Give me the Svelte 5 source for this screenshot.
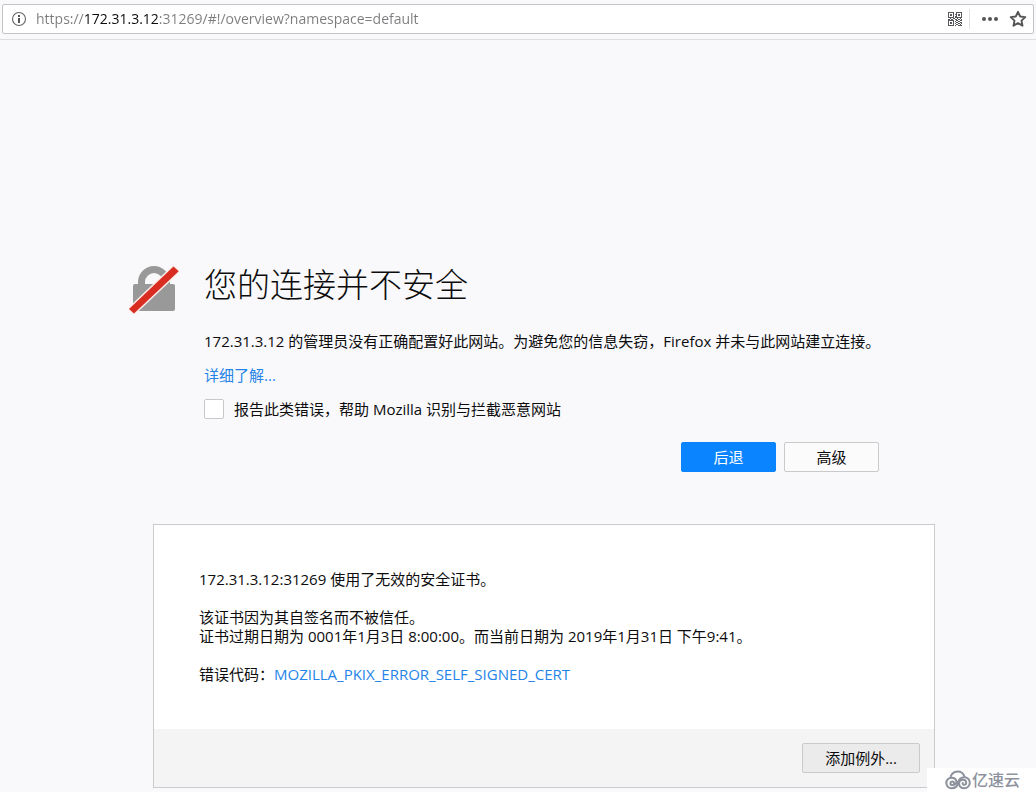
<script>
  let url = $state("https://172.31.3.12:31269/#!/overview?namespace=default");
  let report = $state(false);
  let starred = $state(false);
  let showDetails = $state(true);

  const host = "172.31.3.12";
  const errorCode = "MOZILLA_PKIX_ERROR_SELF_SIGNED_CERT";

  // QR glyph, one string per row
  const qr = [
    "11111100111111",
    "10000100100001",
    "10110101101101",
    "10110100101101",
    "10000101100001",
    "11111101111111",
    "00100110010010",
    "11011001101101",
    "11111100110011",
    "10000101001100",
    "10110100110011",
    "10110101001101",
    "10000100110010",
    "11111101001111",
  ];
</script>

<div class="page">
  <header class="toolbar">
    <div class="urlbar">
      <button class="icon-btn" aria-label="Site information">
        <svg width="16" height="16" viewBox="0 0 16 16">
          <circle cx="8" cy="8" r="6.5" fill="none" stroke="#666" stroke-width="1.1" />
          <path d="M7 4h2v2H7zM7 7h2v5H7z" fill="#555" />
        </svg>
      </button>
      <input class="urlbar__input" type="text" aria-label="Address" spellcheck="false" bind:value={url} />
      <button class="icon-btn" aria-label="QR code">
        <svg width="16" height="16" viewBox="0 0 16 16" fill="#56585c" shape-rendering="crispEdges">
          {#each qr as row, y}
            {#each row as cell, x}
              {#if cell === "1"}
                <rect x={x + 1} y={y + 1} width="1" height="1" />
              {/if}
            {/each}
          {/each}
        </svg>
      </button>
      <span class="urlbar__sep"></span>
      <button class="icon-btn" aria-label="Page actions">
        <svg width="18" height="16" viewBox="0 0 18 16" fill="#555">
          <circle cx="3" cy="8" r="2" />
          <circle cx="9" cy="8" r="2" />
          <circle cx="15" cy="8" r="2" />
        </svg>
      </button>
      <button
        class="icon-btn"
        aria-label="Bookmark"
        aria-pressed={starred}
        onclick={() => (starred = !starred)}
      >
        <svg width="18" height="18" viewBox="0 0 18 18">
          <path
            d="M9 1.8l2.2 4.7 5.1.6-3.8 3.5 1 5.1L9 13.2l-4.500 2.500 1-5.100L1.700 7.100l5.100-.6z"
            fill={starred ? "#0a84ff" : "none"}
            stroke="#555"
            stroke-width="1.9"
            stroke-linejoin="round"
          />
        </svg>
      </button>
    </div>
  </header>

  <main class="error">
    <div class="error__intro">
      <svg class="lock" width="50" height="50" viewBox="0 0 50 50" aria-hidden="true">
        <path d="M12.500 22v-4a12.500 12.500 0 0 1 25 0v4" fill="none" stroke="#999" stroke-width="7" />
        <rect x="4" y="20" width="42" height="27" rx="2" fill="#999" />
        <path
          d="M0 45L44.500 2.500l5.200 4.700L5 49.500z"
          fill="#d92d21"
          stroke="#fbeeea"
          stroke-width="3"
          paint-order="stroke"
        />
      </svg>

      <div class="error__text">
        <h1>您的连接并不安全</h1>
        <p>{host} 的管理员没有正确配置好此网站。为避免您的信息失窃，Firefox 并未与此网站建立连接。</p>
        <p><a href="#learn-more">详细了解...</a></p>
        <label class="report">
          <input type="checkbox" bind:checked={report} />
          <span>报告此类错误，帮助 Mozilla 识别与拦截恶意网站</span>
        </label>
        <div class="actions">
          <button class="btn btn--primary">后退</button>
          <button class="btn" onclick={() => (showDetails = !showDetails)}>高级</button>
        </div>
      </div>
    </div>

    {#if showDetails}
      <section class="details">
        <div class="details__body">
          <p>{host}:31269 使用了无效的安全证书。</p>
          <p>
            该证书因为其自签名而不被信任。<br />
            证书过期日期为 0001年1月3日 8:00:00。而当前日期为 2019年1月31日 下午9:41。
          </p>
          <p>错误代码：<a href="#error-code">{errorCode}</a></p>
        </div>
        <div class="details__footer">
          <button class="btn btn--grey">添加例外...</button>
        </div>
      </section>
    {/if}
  </main>

  <div class="watermark">
    <svg width="26" height="20" viewBox="0 0 26 20" fill="none" stroke="#8d929d" stroke-width="2" stroke-linecap="round">
      <path d="M5.500 8C5.500 4.500 8.500 1.500 12.500 1.500c3.500 0 6 2 7 5" />
      <path d="M9 13.500a1.800 1.800 0 1 0-2 1.600c3 .2 4.500-1.600 4.500-3.600A4.900 4.900 0 0 0 6.500 7.800a5.200 5.200 0 0 0 0 10.400c4 0 6-2.200 6.500-5.200s2.500-5.800 6.300-5.800a5.500 5.500 0 0 1 0 11c-3.300 0-5.200-2-5.200-4.500s1.900-4 3.900-4 3.200 1.400 3.200 2.800-1 2.300-2 2.300-1.700-.8-1.500-1.700" />
    </svg>
    <span>亿速云</span>
  </div>
</div>

<style>
  :global(body) {
    margin: 0;
    background: #f9f9fb;
  }

  .page {
    position: relative;
    min-height: 100vh;
    box-sizing: border-box;
    padding-bottom: 4px;
    font-family: "Open Sans", "Noto Sans CJK SC", sans-serif;
    font-size: 15px;
    line-height: 20px;
    color: #0c0c0d;
  }

  a {
    color: #2484e8;
    text-decoration: none;
  }
  a:hover {
    text-decoration: underline;
  }
  p {
    margin: 0;
  }

  /* toolbar */
  .toolbar {
    padding: 4px 2px 5px;
    border-bottom: 1px solid #dedee0;
  }
  .urlbar {
    display: flex;
    align-items: center;
    box-sizing: border-box;
    height: 30px;
    padding: 0 6px 0 8px;
    background: #fff;
    border: 1px solid #c4c4c6;
    border-radius: 2px;
  }
  .urlbar__input {
    flex: 1;
    min-width: 0;
    margin: 0 9px;
    padding: 0;
    border: 0;
    outline: none;
    font-family: inherit;
    font-size: 14px;
    line-height: 20px;
    color: #7c7c7f;
    /* the host part is darker than the rest of the address */
    background: linear-gradient(90deg, #7c7c7f 48px, #0c0c0d 48px 123px, #7c7c7f 123px);
    background-clip: text;
    -webkit-background-clip: text;
    -webkit-text-fill-color: transparent;
  }
  .urlbar__sep {
    width: 1px;
    height: 20px;
    margin: 0 11px 0 6px;
    background: #e2e2e4;
  }
  .icon-btn {
    display: flex;
    padding: 0;
    border: 0;
    background: none;
    cursor: pointer;
  }
  .icon-btn + .icon-btn {
    margin-left: 10px;
  }

  /* error page */
  .error {
    max-width: 806px;
    margin: 0 auto;
    padding: 223px 101px 0 129px;
  }
  .error__intro {
    display: flex;
    gap: 25px;
    margin-right: 40px;
  }
  .lock {
    flex: none;
    margin-top: 1px;
  }
  .error__text {
    flex: 1;
    display: flex;
    flex-direction: column;
    gap: 14px;
  }
  h1 {
    margin: 0 0 10px;
    font-size: 33px;
    font-weight: 300;
    line-height: 44px;
  }
  .report {
    display: flex;
    gap: 10px;
  }
  .report input {
    appearance: none;
    box-sizing: border-box;
    flex: none;
    width: 20px;
    height: 20px;
    margin: 0;
    background: #fff;
    border: 1px solid #c8c8ca;
    border-radius: 2px;
  }
  .report input:checked {
    background: #0a84ff;
  }
  .actions {
    display: flex;
    justify-content: flex-end;
    gap: 8px;
    margin: 9px 16px 0 0;
  }

  .btn {
    box-sizing: border-box;
    min-width: 95px;
    height: 30px;
    padding: 0 22px;
    font: inherit;
    color: #0c0c0d;
    background: #fbfbfb;
    border: 1px solid #cacacc;
    border-radius: 2px;
    cursor: pointer;
  }
  .btn--primary {
    color: #fff;
    background: #0a84ff;
    border-color: #0a84ff;
  }
  .btn--grey {
    background: #ebebeb;
  }

  .details {
    margin: 52px 0 0 24px;
    background: #fff;
    border: 1px solid #cbcbcd;
  }
  .details__body {
    display: flex;
    flex-direction: column;
    gap: 19px;
    padding: 45px;
    line-height: 19px;
  }
  .details__footer {
    display: flex;
    justify-content: flex-end;
    padding: 14px;
    background: #f4f4f5;
  }

  .watermark {
    position: absolute;
    right: 0;
    bottom: 0;
    display: flex;
    align-items: center;
    gap: 1px;
    padding: 2px 16px 2px 18px;
    background: #fff;
    font-size: 16px;
    font-weight: 500;
    color: #8d929d;
  }
</style>
